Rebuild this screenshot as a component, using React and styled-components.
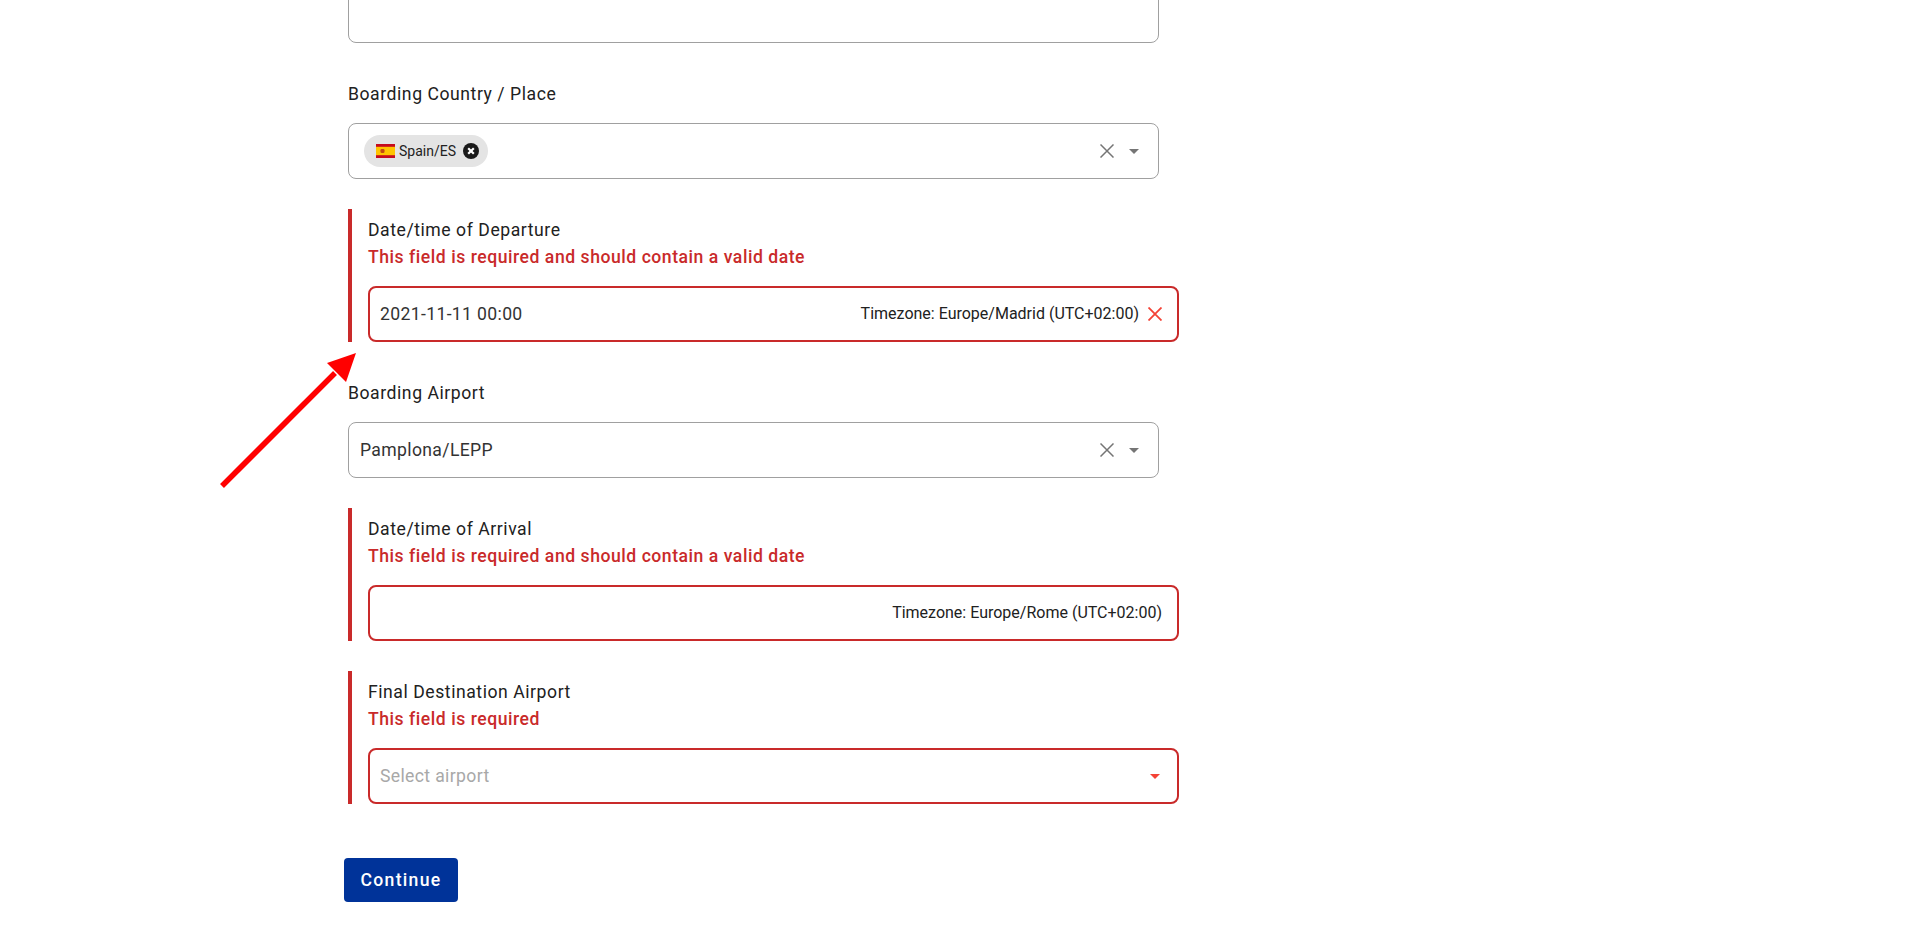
import styled, { createGlobalStyle } from "styled-components"

const GlobalStyle = createGlobalStyle`
    html, body {
        margin: 0;
        height: 100%;
        overflow: hidden;
        background: #ffffff;
        font-family: Roboto, "Liberation Sans", sans-serif;
        color: #212121;
    }
`

const Page = styled.main`
    position: relative;
    width: 1920px;
    height: 937px;
    overflow: hidden;
    padding-left: 348px;
    box-sizing: border-box;
`

const Form = styled.form`
    width: 811px;
    margin-top: -13px;
    display: flex;
    flex-direction: column;
    gap: 30px;
`

const Plain = styled.div`
    display: flex;
    flex-direction: column;
`

const Invalid = styled.div`
    display: flex;
    flex-direction: column;
    width: 811px;
    border-left: 4px solid #c92a2a;
    padding: 9px 0 0 16px;
`

const Label = styled.label`
    font-size: 17.6px;
    line-height: 24px;
    letter-spacing: 0.55px;
    color: #212121;
`

const PlainLabel = styled(Label)`
    padding: 9px 0 17px;
`

const ErrorText = styled.div`
    font-size: 17.6px;
    line-height: 24px;
    font-weight: 500;
    letter-spacing: 0.53px;
    color: #c92a2a;
    margin: 3px 0 17px;
`

const Box = styled.div`
    box-sizing: border-box;
    height: 56px;
    display: flex;
    align-items: center;
    border-radius: 8px;
    padding: 0 10px;
    border: ${(p) => (p.$error ? "2px solid #c92a2a" : "1px solid #a0a0a0")};
    padding-left: ${(p) => (p.$error ? "10px" : "11px")};
`

const Value = styled.span`
    flex: 1;
    font-size: 17.6px;
    letter-spacing: 0.35px;
    color: ${(p) => (p.$placeholder ? "#a8a8a8" : "#333333")};
`

const Chips = styled.div`
    flex: 1;
    display: flex;
    align-items: center;
`

const Chip = styled.div`
    height: 32px;
    width: 124px;
    margin-left: 4px;
    box-sizing: border-box;
    padding: 0 9px 0 12px;
    display: flex;
    align-items: center;
    background: #e4e4e4;
    border-radius: 16px;
    font-size: 14px;
    color: #212121;
    span {
        margin-left: 4px;
        margin-top: -1px;
        flex: 1;
    }
`

const Timezone = styled.span`
    font-size: 16px;
    color: #212121;
    margin-top: -1px;
    margin-right: ${(p) => p.$gap}px;
`

const Icons = styled.div`
    display: flex;
    align-items: center;
    gap: 15px;
    margin-right: ${(p) => p.$end}px;
`

const Continue = styled.button`
    display: block;
    width: 114px;
    height: 44px;
    margin: 24px 0 0 -4px;
    border: none;
    border-radius: 4px;
    background: #003399;
    color: #ffffff;
    font-family: inherit;
    font-size: 17.6px;
    font-weight: 500;
    letter-spacing: 1.3px;
`

const Annotation = styled.svg`
    position: absolute;
    left: 215px;
    top: 345px;
`

const Flag = () => (
    <svg width="19" height="14" viewBox="0 0 19 14">
        <rect width="19" height="14" fill="#c60b1e" />
        <rect y="2.8" width="19" height="8.4" fill="#ffc400" />
        <rect x="4.5" y="5" width="4" height="4" rx="1.2" fill="#ad1519" opacity="0.7" />
    </svg>
)

const ChipClose = () => (
    <svg width="16" height="16" viewBox="0 0 16 16">
        <circle cx="8" cy="8" r="8" fill="#1a1a1a" />
        <path d="M5.2 5.2l5.6 5.6M10.8 5.2l-5.6 5.6" stroke="#ffffff" strokeWidth="2.2" fill="none" />
    </svg>
)

const Cross = ({ color = "#757575", weight = 1.5 }) => (
    <svg width="14" height="14" viewBox="0 0 14 14">
        <path d="M0.5 0.5l13 13M13.5 0.5l-13 13" stroke={color} strokeWidth={weight} fill="none" />
    </svg>
)

const Caret = ({ color = "#757575" }) => (
    <svg width="10" height="5" viewBox="0 0 10 5">
        <path d="M0 0h10L5 5z" fill={color} />
    </svg>
)

const App = () => {
    return (
        <Page>
            <GlobalStyle />
            <Form>
                <Box />

                <Plain>
                    <PlainLabel>Boarding Country / Place</PlainLabel>
                    <Box>
                        <Chips>
                            <Chip>
                                <Flag />
                                <span>Spain/ES</span>
                                <ChipClose />
                            </Chip>
                        </Chips>
                        <Icons $end={9}>
                            <Cross />
                            <Caret />
                        </Icons>
                    </Box>
                </Plain>

                <Invalid>
                    <Label>Date/time of Departure</Label>
                    <ErrorText>This field is required and should contain a valid date</ErrorText>
                    <Box $error>
                        <Value>2021-11-11 00:00</Value>
                        <Timezone $gap={9}>Timezone: Europe/Madrid (UTC+02:00)</Timezone>
                        <Icons $end={5}>
                            <Cross color="#f44336" weight={1.8} />
                        </Icons>
                    </Box>
                </Invalid>

                <Plain>
                    <PlainLabel>Boarding Airport</PlainLabel>
                    <Box>
                        <Value>Pamplona/LEPP</Value>
                        <Icons $end={9}>
                            <Cross />
                            <Caret />
                        </Icons>
                    </Box>
                </Plain>

                <Invalid>
                    <Label>Date/time of Arrival</Label>
                    <ErrorText>This field is required and should contain a valid date</ErrorText>
                    <Box $error>
                        <Value />
                        <Timezone $gap={5}>Timezone: Europe/Rome (UTC+02:00)</Timezone>
                    </Box>
                </Invalid>

                <Invalid>
                    <Label>Final Destination Airport</Label>
                    <ErrorText>This field is required</ErrorText>
                    <Box $error>
                        <Value $placeholder>Select airport</Value>
                        <Icons $end={7}>
                            <Caret color="#f44336" />
                        </Icons>
                    </Box>
                </Invalid>

                <Continue type="button">Continue</Continue>
            </Form>

            <Annotation width="150" height="150" viewBox="0 0 150 150">
                <path d="M7 141L120 28" stroke="#ff0000" strokeWidth="5.5" fill="none" />
                <path d="M141 8L112 18L131 37z" fill="#ff0000" />
            </Annotation>
        </Page>
    )
}

export default App
